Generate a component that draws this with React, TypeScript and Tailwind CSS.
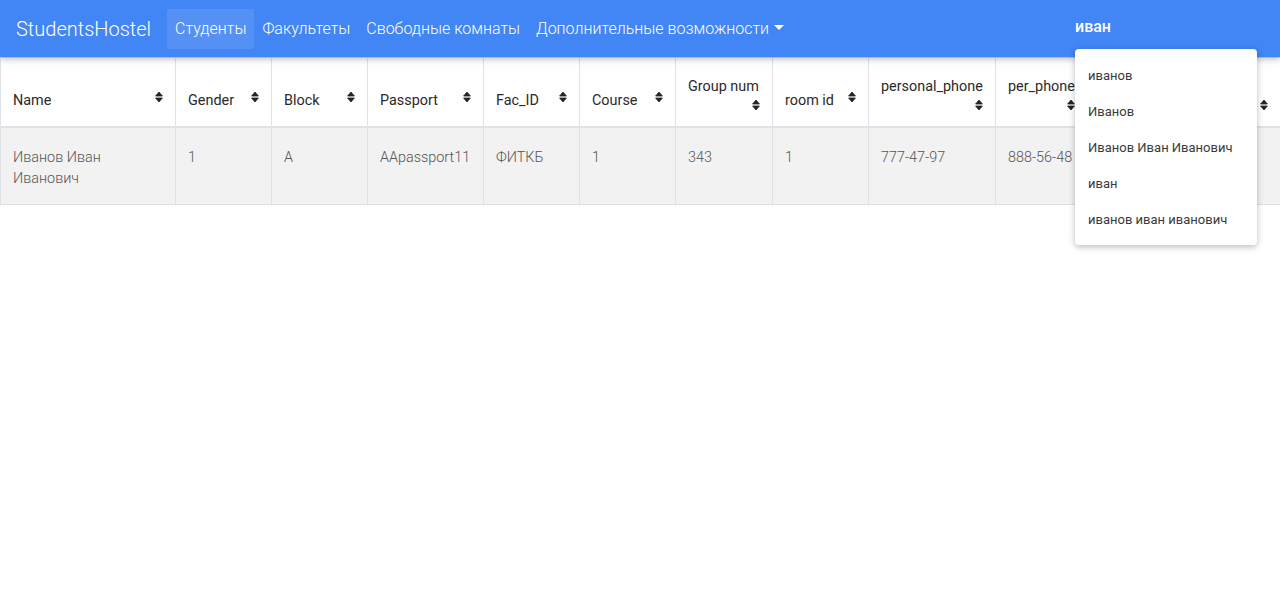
import React from "react"

type Column = { title: string, w: string, wrap?: boolean }

const columns: Column[] = [
  { title: "Name", w: "w-[175px]" },
  { title: "Gender", w: "w-[96px]" },
  { title: "Block", w: "w-[96px]" },
  { title: "Passport", w: "w-[116px]" },
  { title: "Fac_ID", w: "w-[96px]" },
  { title: "Course", w: "w-[96px]" },
  { title: "Group num", w: "w-[97px]", wrap: true },
  { title: "room id", w: "w-[96px]" },
  { title: "personal_phone", w: "w-[127px]", wrap: true },
  { title: "per_phone", w: "w-[92px]", wrap: true },
  // header of this one is under the search dropdown
  { title: "", w: "w-[193px]" },
]

const student = ["1", "A", "AApassport11", "ФИТКБ", "1", "343", "1", "777-47-97", "888-56-48", ""]

const navLinks = ["Студенты", "Факультеты", "Свободные комнаты"]

const suggestions = ["иванов", "Иванов", "Иванов Иван Иванович", "иван", "иванов иван иванович"]

const SortIcon = () => (
  <svg width="8" height="12" viewBox="0 0 8 12" className="block">
    <path d="M0.6 5 L4 1 L7.4 5 Z M0.6 7 L4 11 L7.4 7 Z" fill="#212529" stroke="#212529" strokeWidth="0.8" strokeLinejoin="round" />
  </svg>
)

const App = () => {
  return (
    <div className="min-h-[608px] bg-white font-['Roboto',sans-serif]">
      {/* NAVBAR */}
      <nav className="relative z-10 flex h-[57px] items-center bg-[#4285f4] px-4 shadow-[0_2px_5px_0_rgba(0,0,0,0.16),0_2px_10px_0_rgba(0,0,0,0.12)]">
        <span className="mr-4 text-[20px] font-light leading-[30px] text-white">StudentsHostel</span>

        <ul className="flex">
          {navLinks.map((link, i) => (
            <li
              key={link}
              className={`px-2 py-2 text-[16px] font-light leading-6 text-white ${i === 0 ? "rounded-[2px] bg-white/10" : ""}`}
            >
              {link}
            </li>
          ))}
          <li className="px-2 py-2 text-[16px] font-light leading-6 text-white">
            Дополнительные возможности
            <span className="ml-[5px] inline-block border-x-[5px] border-t-[5px] border-x-transparent border-t-white align-[0.2em]"></span>
          </li>
        </ul>

        {/* SEARCH */}
        <div className="relative ml-auto mr-[7px] flex h-10 w-[182px] items-center pb-1">
          <span className="text-[16px] font-medium text-white">иван</span>

          <div className="absolute left-0 top-full w-full rounded-[4px] bg-white pb-[7px] pt-[9px] shadow-[0_2px_5px_0_rgba(0,0,0,0.16),0_2px_10px_0_rgba(0,0,0,0.12)]">
            {suggestions.map(item => (
              <div key={item} className="flex h-9 items-center px-[13px] text-[13px] text-[#3a3a3a]">
                {item}
              </div>
            ))}
          </div>
        </div>
      </nav>

      {/* TABLE */}
      <table className="w-[1280px] table-fixed border-collapse text-[14.4px] text-[#2a2a2a]">
        <thead>
          <tr>
            {columns.map((col, i) => (
              <th
                key={i}
                className={`${col.w} h-[69px] border border-b-2 border-[#dee2e6] px-3 pb-[14px] pt-0 text-left align-bottom font-normal`}
              >
                {col.wrap ? (
                  <>
                    <div className="whitespace-nowrap leading-[21.6px]">{col.title}</div>
                    <div className="flex h-[14px] items-center justify-end"><SortIcon /></div>
                  </>
                ) : (
                  <div className="flex items-start justify-between">
                    <span className="whitespace-nowrap leading-[21.6px]">{col.title}</span>
                    <span className="flex h-[14px] items-center"><SortIcon /></span>
                  </div>
                )}
              </th>
            ))}
          </tr>
        </thead>
        <tbody>
          <tr className="bg-[#f2f2f2]">
            <td className="border border-[#dee2e6] px-3 pb-[14px] pt-[19px] align-top font-light leading-[21.6px] text-[#555]">
              Иванов Иван<br />Иванович
            </td>
            {student.map((value, i) => (
              <td key={i} className="overflow-hidden whitespace-nowrap border border-[#dee2e6] px-3 pb-[14px] pt-[19px] align-top font-light leading-[21.6px] text-[#555]">
                {value}
              </td>
            ))}
          </tr>
        </tbody>
      </table>
    </div>
  )
}

export default App
